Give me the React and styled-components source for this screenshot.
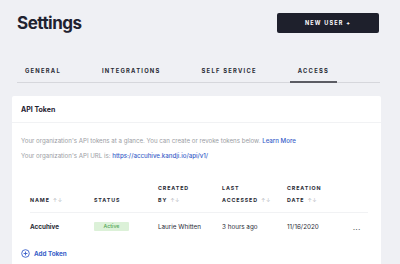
import styled, { createGlobalStyle } from "styled-components";

const GlobalStyle = createGlobalStyle`
	html, body {
		margin: 0;
		padding: 0;
		background: #eff0f4;
		font-family: "Inter", "Liberation Sans", sans-serif;
		color: #1f2230;
		overflow: hidden;
	}
`;

const columns = [
	{ label: ["NAME"], sort: true },
	{ label: ["STATUS"], sort: false },
	{ label: ["CREATED", "BY"], sort: true },
	{ label: ["LAST", "ACCESSED"], sort: true },
	{ label: ["CREATION", "DATE"], sort: true },
];

const tokens = [
	{
		name: "Accuhive",
		status: "Active",
		createdBy: "Laurie Whitten",
		lastAccessed: "3 hours ago",
		created: "11/16/2020",
	},
];

function SortArrows() {
	return <Arrows>↑↓</Arrows>;
}

export default function App() {
	return (
		<>
			<GlobalStyle />
			<Page>
				<Header>
					<Title>Settings</Title>
					<NewUserButton>NEW USER +</NewUserButton>
				</Header>
				<Tabs>
					<Tab>GENERAL</Tab>
					<Tab>INTEGRATIONS</Tab>
					<Tab>SELF SERVICE</Tab>
					<Tab active>ACCESS</Tab>
				</Tabs>
				<Card>
					<CardHeader>API Token</CardHeader>
					<CardBody>
						<Description>
							Your organization's API tokens at a glance. You can create or revoke tokens below.{" "}
							<Link>Learn More</Link>
						</Description>
						<Description>
							Your organization's API URL is: <Link>https://accuhive.kandji.io/api/v1/</Link>
						</Description>
					</CardBody>
					<Table>
						<HeadRow>
							{columns.map((col) => (
								<HeadCell key={col.label.join(" ")}>
									{col.label.map((line, i) => (
										<div key={line}>
											{line}
											{col.sort && i === col.label.length - 1 && <SortArrows />}
										</div>
									))}
								</HeadCell>
							))}
							<HeadCell />
						</HeadRow>
						{tokens.map((t) => (
							<Row key={t.name}>
								<NameCell>{t.name}</NameCell>
								<Cell>
									<Badge>{t.status}</Badge>
								</Cell>
								<Cell>{t.createdBy}</Cell>
								<Cell>{t.lastAccessed}</Cell>
								<Cell>{t.created}</Cell>
								<MoreCell>•••</MoreCell>
							</Row>
						))}
					</Table>
					<AddToken>
						<svg width="9" height="9" viewBox="0 0 16 16" fill="none">
							<circle cx="8" cy="8" r="6.8" stroke="#3a5fc9" strokeWidth="1.6" />
							<path d="M8 4.6v6.8M4.6 8h6.8" stroke="#3a5fc9" strokeWidth="1.6" />
						</svg>
						Add Token
					</AddToken>
				</Card>
			</Page>
		</>
	);
}

const Page = styled.div`
	width: 400px;
	height: 264px;
	padding: 0 19px 0 12px;
	box-sizing: border-box;
	overflow: hidden;
`;

const Header = styled.div`
	display: flex;
	align-items: center;
	justify-content: space-between;
	padding: 13px 2px 0 5px;
	height: 20px;
`;

const Title = styled.h1`
	margin: 0;
	font-size: 17px;
	font-weight: 700;
	letter-spacing: -0.5px;
	color: #1f2230;
	line-height: 20px;
`;

const NewUserButton = styled.button`
	width: 102px;
	height: 20px;
	border: none;
	border-radius: 2px;
	background: #1e202c;
	color: #ffffff;
	font-family: "Inter", "Liberation Sans", sans-serif;
	font-size: 5.5px;
	font-weight: 700;
	letter-spacing: 1.2px;
	padding: 0;
`;

const Tabs = styled.div`
	display: flex;
	gap: 25px;
	margin: 27px 1px 0 5px;
	border-bottom: 1px solid #d6d7dc;
`;

const Tab = styled.div`
	padding: 0 8px;
	height: 21px;
	display: flex;
	align-items: center;
	font-size: 5.8px;
	font-weight: 700;
	letter-spacing: 1.25px;
	color: #2a2c36;
	margin-bottom: -1px;
	border-bottom: 2px solid ${(p) => (p.active ? "#5b5c63" : "transparent")};
`;

const Card = styled.div`
	margin-top: 13px;
	background: #ffffff;
	height: 180px;
	border-radius: 2px;
`;

const CardHeader = styled.div`
	padding: 0 9px;
	height: 26px;
	display: flex;
	align-items: center;
	font-size: 7px;
	font-weight: 700;
	color: #1f2230;
	border-bottom: 1px solid #f1f2f4;
`;

const CardBody = styled.div`
	padding: 13px 9px 0;
	display: flex;
	flex-direction: column;
	gap: 6px;
`;

const Description = styled.p`
	margin: 0;
	font-size: 6.15px;
	line-height: 9px;
	color: #9a9ca3;
`;

const Link = styled.span`
	color: #3a5fc9;
	font-weight: 500;
`;

const Table = styled.div`
	margin: 22px 13px 0 18px;
`;

const HeadRow = styled.div`
	display: grid;
	grid-template-columns: 64px 64px 64px 65px 64px 1fr;
	align-items: end;
	padding-bottom: 6px;
	border-bottom: 1px solid #f1f2f4;
`;

const HeadCell = styled.div`
	font-size: 5.3px;
	font-weight: 700;
	letter-spacing: 0.9px;
	line-height: 12px;
	color: #2a2c36;
`;

const Arrows = styled.span`
	margin-left: 3px;
	color: #b7b9c0;
	font-weight: 400;
	letter-spacing: 0.5px;
`;

const Row = styled.div`
	display: grid;
	grid-template-columns: 64px 64px 64px 65px 64px 1fr;
	align-items: center;
	height: 27px;
`;

const Cell = styled.div`
	font-size: 6.3px;
	color: #2a2c36;
`;

const NameCell = styled(Cell)`
	font-weight: 700;
`;

const Badge = styled.span`
	display: inline-block;
	width: 35px;
	text-align: center;
	height: 9px;
	line-height: 9px;
	background: #dcf1d8;
	color: #55a85a;
	font-size: 5.3px;
	font-weight: 500;
	border-radius: 1px;
`;

const MoreCell = styled.div`
	font-size: 3.5px;
	letter-spacing: 0.6px;
	color: #5b5c63;
	padding: 7px 0 0 2px;
`;

const AddToken = styled.div`
	display: flex;
	align-items: center;
	gap: 4px;
	padding: 9px 9px 0;
	font-size: 6.3px;
	font-weight: 700;
	color: #3a5fc9;
`;
